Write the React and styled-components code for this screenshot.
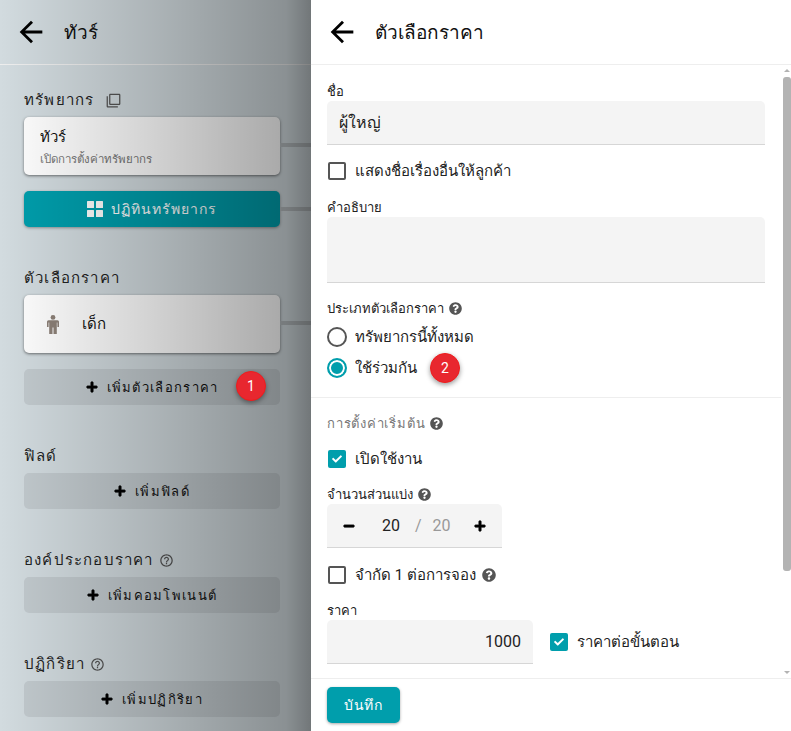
import styled, { createGlobalStyle } from 'styled-components';
import { MdArrowBack, MdFilterNone, MdHelpOutline } from 'react-icons/md';
import { FaCheck, FaMinus, FaPlus, FaQuestionCircle } from 'react-icons/fa';

const GlobalStyle = createGlobalStyle`
  html, body {
    margin: 0;
    height: 100%;
    overflow: hidden;
  }
  body {
    font-family: Roboto, "Noto Sans", "DejaVu Sans", sans-serif;
    color: #1a1a1a;
  }
  * {
    box-sizing: border-box;
  }
`;

const Page = styled.div`
  display: flex;
  width: 791px;
  height: 731px;
  overflow: hidden;
`;

const LeftPanel = styled.div`
  position: relative;
  width: 311px;
  height: 731px;
  flex-shrink: 0;
  background: #d2dbdf;

  &::after {
    content: '';
    position: absolute;
    inset: 0;
    background: linear-gradient(
      to right,
      rgba(0, 0, 0, 0) 0%,
      rgba(0, 0, 0, 0.18) 50%,
      rgba(0, 0, 0, 0.34) 92%,
      rgba(0, 0, 0, 0.46) 100%
    );
    pointer-events: none;
    z-index: 3;
  }
`;

const RightPanel = styled.div`
  position: relative;
  width: 480px;
  height: 731px;
  display: flex;
  flex-direction: column;
  background: #fff;
`;

const Header = styled.div`
  height: 65px;
  flex-shrink: 0;
  display: flex;
  align-items: center;
  gap: 16px;
  padding-left: 14px;
  border-bottom: 1px solid #eee;
  background: ${(p) => (p.$plain ? '#fff' : 'transparent')};
  font-size: 19px;
  font-weight: 500;
  color: #111;

  svg {
    font-size: 34px;
    color: #000;
  }
`;

const LeftBody = styled.div`
  padding: 24px 31px 0 24px;
  display: flex;
  flex-direction: column;
  gap: 40px;
`;

const Section = styled.div`
  display: flex;
  flex-direction: column;
`;

const SectionTitle = styled.div`
  height: 20px;
  margin-bottom: 8px;
  padding-top: 2px;
  display: flex;
  align-items: center;
  gap: ${(p) => p.$gap || 5}px;
  font-size: 15px;
  font-weight: 500;
  letter-spacing: 0.08em;
  color: #222;

  svg {
    font-size: 15px;
    color: #555;
  }
`;

const Card = styled.div`
  position: relative;
  height: 58px;
  display: flex;
  align-items: center;
  gap: 23px;
  padding: 0 16px;
  background: #fff;
  border-radius: 5px;
  box-shadow: 0 1px 3px rgba(0, 0, 0, 0.5);

  &::after {
    content: '';
    position: absolute;
    left: 100%;
    top: 26px;
    width: 31px;
    height: 4px;
    background: #b4babd;
  }
`;

const CardText = styled.div`
  display: flex;
  flex-direction: column;
  gap: 1px;
  padding-top: 1px;
`;

const CardTitle = styled.div`
  font-size: 15px;
  font-weight: 500;
  color: #111;
`;

const CardHint = styled.div`
  font-size: 11.5px;
  color: #777;
`;

const PersonGlyph = styled.svg`
  width: 12px;
  height: 19px;
  margin-left: 7px;
  fill: #8d8178;
`;

const ResourceButton = styled.div`
  position: relative;
  height: 36px;
  margin-top: 16px;
  display: flex;
  align-items: center;
  justify-content: center;
  gap: 8px;
  border-radius: 5px;
  background: #009eac;
  color: #fff;
  font-size: 14px;
  font-weight: 500;
  letter-spacing: 0.07em;
  box-shadow: 0 1px 3px rgba(0, 0, 0, 0.35);

  &::after {
    content: '';
    position: absolute;
    left: 100%;
    top: 16px;
    width: 31px;
    height: 4px;
    background: #b4babd;
  }
`;

const GridGlyph = styled.svg`
  width: 16px;
  height: 16px;
  fill: #fff;
`;

const AddButton = styled.div`
  position: relative;
  height: 36px;
  margin-top: ${(p) => (p.$spaced ? '16px' : '0')};
  display: flex;
  align-items: center;
  justify-content: center;
  gap: 9px;
  border-radius: 5px;
  background: #c2cace;
  font-size: 13px;
  font-weight: 500;
  letter-spacing: 0.1em;
  color: #111;

  svg {
    font-size: 12px;
    color: #000;
    stroke: currentColor;
    stroke-width: 30;
  }
`;

const Badge = styled.div`
  position: absolute;
  left: ${(p) => p.$left}px;
  top: ${(p) => p.$top}px;
  width: 30px;
  height: 30px;
  border-radius: 50%;
  display: flex;
  align-items: center;
  justify-content: center;
  background: #e8272f;
  border: 1px solid #f01c1c;
  color: #fff;
  font-size: 14px;
  box-shadow: 0 2px 5px rgba(0, 0, 0, 0.4);
  z-index: ${(p) => (p.$under ? 2 : 4)};
`;

const Scroller = styled.div`
  flex: 1;
  min-height: 0;
  overflow: hidden;
  padding: 16px 0 0 16px;
`;

const FieldLabel = styled.div`
  height: 20px;
  margin-top: ${(p) => p.$top || 0}px;
  display: flex;
  align-items: center;
  gap: 5px;
  font-size: 13px;
  color: ${(p) => (p.$muted ? '#777' : '#222')};
  letter-spacing: ${(p) => (p.$muted ? '0.06em' : '0')};

  svg {
    font-size: 13px;
    color: #555;
  }
`;

const TextBox = styled.div`
  width: ${(p) => p.$width}px;
  height: ${(p) => p.$height}px;
  display: flex;
  align-items: center;
  justify-content: ${(p) => (p.$right ? 'flex-end' : 'flex-start')};
  padding: 0 12px;
  background: #f4f4f4;
  border-radius: 5px 5px 0 0;
  border-bottom: 1px solid #d6d6d6;
  font-size: 16px;
  color: #222;
`;

const OptionRow = styled.div`
  height: ${(p) => p.$height || 32}px;
  display: flex;
  align-items: center;
  gap: 9px;
  padding-left: 1px;
  margin-top: ${(p) => p.$top || 0}px;
  margin-bottom: ${(p) => p.$bottom || 0}px;
  font-size: 15px;
  color: #222;

  svg.help {
    font-size: 14px;
    color: #555;
    margin-left: -3px;
  }
`;

const Box = styled.span`
  width: 18px;
  height: 18px;
  flex-shrink: 0;
  display: flex;
  align-items: center;
  justify-content: center;
  border-radius: 2px;
  border: ${(p) => (p.$checked ? 'none' : '2px solid #555')};
  background: ${(p) => (p.$checked ? '#009eac' : '#fff')};

  svg {
    font-size: 10px;
    color: #fff;
  }
`;

const Radio = styled.span`
  width: 20px;
  height: 20px;
  margin: 0 -1px;
  flex-shrink: 0;
  border-radius: 50%;
  border: 2px solid ${(p) => (p.$checked ? '#009eac' : '#555')};
  background: ${(p) => (p.$checked ? '#009eac' : '#fff')};
  box-shadow: inset 0 0 0 2px #fff;
`;

const Divider = styled.div`
  width: 470px;
  height: 1px;
  margin: 14px 0 15px -16px;
  background: #eee;
`;

const Stepper = styled.div`
  width: 175px;
  height: 44px;
  display: flex;
  align-items: center;
  padding: 0 16px;
  background: #f4f4f4;
  border-radius: 5px 5px 0 0;
  border-bottom: 1px solid #d6d6d6;
  font-size: 16px;
  color: #222;

  svg {
    font-size: 12px;
    color: #000;
    flex-shrink: 0;
    stroke: currentColor;
    stroke-width: 30;
  }
`;

const StepValue = styled.span`
  margin-left: 27px;
`;

const StepSlash = styled.span`
  margin-left: 15px;
  color: #999;
`;

const StepMax = styled.span`
  margin-left: 11px;
  margin-right: auto;
  color: #999;
`;

const PriceRow = styled.div`
  display: flex;
  align-items: center;
  gap: 17px;
`;

const PriceOption = styled(OptionRow)`
  padding: 0;
`;

const ScrollTrack = styled.div`
  position: absolute;
  right: 0;
  top: 65px;
  width: 8px;
  height: 613px;
`;

const ScrollThumb = styled.div`
  position: absolute;
  left: 0;
  top: 12px;
  width: 100%;
  height: 494px;
  border-radius: 3px;
  background: #b3b3b3;
`;

const ScrollArrow = styled.div`
  position: absolute;
  left: 1px;
  ${(p) => (p.$down ? 'bottom: 4px;' : 'top: 4px;')}
  width: 0;
  height: 0;
  border-left: 3px solid transparent;
  border-right: 3px solid transparent;
  ${(p) => (p.$down ? 'border-top: 3px solid #b3b3b3;' : 'border-bottom: 3px solid #b3b3b3;')}
`;

const Footer = styled.div`
  height: 53px;
  flex-shrink: 0;
  padding: 8px 16px;
  border-top: 1px solid #eee;
`;

const SaveButton = styled.div`
  width: 73px;
  height: 36px;
  display: flex;
  align-items: center;
  justify-content: center;
  border-radius: 5px;
  background: #009eac;
  color: #fff;
  font-size: 14px;
  font-weight: 500;
  letter-spacing: 0.07em;
  box-shadow: 0 1px 3px rgba(0, 0, 0, 0.35);
`;

const App = () => {
  return (
    <>
      <GlobalStyle />
      <Page>
        <LeftPanel>
          <Header>
            <MdArrowBack />
            ทัวร์
          </Header>
          <LeftBody>
            <Section>
              <SectionTitle $gap={12}>
                ทรัพยากร <MdFilterNone />
              </SectionTitle>
              <Card>
                <CardText>
                  <CardTitle>ทัวร์</CardTitle>
                  <CardHint>เปิดการตั้งค่าทรัพยากร</CardHint>
                </CardText>
              </Card>
              <ResourceButton>
                <GridGlyph viewBox="0 0 16 16">
                  <rect x="0" y="0" width="7" height="7" rx="0.5" />
                  <rect x="9" y="0" width="7" height="7" rx="0.5" />
                  <rect x="0" y="9" width="7" height="7" rx="0.5" />
                  <rect x="9" y="9" width="7" height="7" rx="0.5" />
                </GridGlyph>
                ปฏิทินทรัพยากร
              </ResourceButton>
            </Section>
            <Section>
              <SectionTitle>ตัวเลือกราคา</SectionTitle>
              <Card>
                <PersonGlyph viewBox="0 0 12 19">
                  <circle cx="6" cy="2.4" r="2.4" />
                  <path d="M1.5 5.2h9A1.5 1.5 0 0 1 12 6.7V12h-1.6V7.5h-.6V19H6.5v-6.5h-1V19H2.2V7.5h-.6V12H0V6.7a1.5 1.5 0 0 1 1.5-1.5z" />
                </PersonGlyph>
                <CardTitle>เด็ก</CardTitle>
              </Card>
              <AddButton $spaced>
                <FaPlus />
                เพิ่มตัวเลือกราคา
              </AddButton>
            </Section>
            <Section>
              <SectionTitle>ฟิลด์</SectionTitle>
              <AddButton>
                <FaPlus />
                เพิ่มฟิลด์
              </AddButton>
            </Section>
            <Section>
              <SectionTitle>
                องค์ประกอบราคา <MdHelpOutline />
              </SectionTitle>
              <AddButton>
                <FaPlus />
                เพิ่มคอมโพเนนต์
              </AddButton>
            </Section>
            <Section>
              <SectionTitle>
                ปฏิกิริยา <MdHelpOutline />
              </SectionTitle>
              <AddButton>
                <FaPlus />
                เพิ่มปฏิกิริยา
              </AddButton>
            </Section>
          </LeftBody>
          <Badge $left={236} $top={371}>
            1
          </Badge>
        </LeftPanel>

        <RightPanel>
          <Header $plain>
            <MdArrowBack />
            ตัวเลือกราคา
          </Header>
          <Scroller>
            <FieldLabel>ชื่อ</FieldLabel>
            <TextBox $width={438} $height={44}>
              ผู้ใหญ่
            </TextBox>
            <OptionRow $top={10} $bottom={10}>
              <Box />
              แสดงชื่อเรื่องอื่นให้ลูกค้า
            </OptionRow>
            <FieldLabel>คำอธิบาย</FieldLabel>
            <TextBox $width={438} $height={66} />
            <FieldLabel $top={15}>
              ประเภทตัวเลือกราคา <FaQuestionCircle />
            </FieldLabel>
            <OptionRow $top={3} $height={31}>
              <Radio />
              ทรัพยากรนี้ทั้งหมด
            </OptionRow>
            <OptionRow $height={31}>
              <Radio $checked />
              ใช้ร่วมกัน
            </OptionRow>
            <Divider />
            <FieldLabel $muted>
              การตั้งค่าเริ่มต้น <FaQuestionCircle />
            </FieldLabel>
            <OptionRow $top={10}>
              <Box $checked>
                <FaCheck />
              </Box>
              เปิดใช้งาน
            </OptionRow>
            <FieldLabel $top={9}>
              จำนวนส่วนแบ่ง <FaQuestionCircle />
            </FieldLabel>
            <Stepper>
              <FaMinus />
              <StepValue>20</StepValue>
              <StepSlash>/</StepSlash>
              <StepMax>20</StepMax>
              <FaPlus />
            </Stepper>
            <OptionRow $top={11}>
              <Box />
              จำกัด 1 ต่อการจอง
              <FaQuestionCircle className="help" />
            </OptionRow>
            <FieldLabel $top={9}>ราคา</FieldLabel>
            <PriceRow>
              <TextBox $width={206} $height={44} $right>
                1000
              </TextBox>
              <PriceOption>
                <Box $checked>
                  <FaCheck />
                </Box>
                ราคาต่อขั้นตอน
              </PriceOption>
            </PriceRow>
          </Scroller>
          <ScrollTrack>
            <ScrollArrow />
            <ScrollThumb />
            <ScrollArrow $down />
          </ScrollTrack>
          <Footer>
            <SaveButton>บันทึก</SaveButton>
          </Footer>
          <Badge $left={119} $top={353} $under>
            2
          </Badge>
        </RightPanel>
      </Page>
    </>
  );
};

export default App;
